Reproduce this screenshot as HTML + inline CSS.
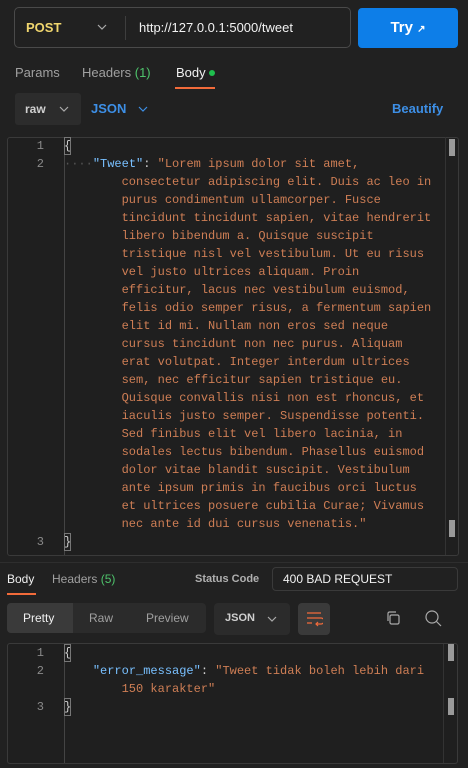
<!DOCTYPE html>
<html><head><meta charset="utf-8"><style>
*{margin:0;padding:0;box-sizing:border-box}
body{width:468px;height:768px;background:#212121;font-family:"Liberation Sans",sans-serif;color:#e6e6e6;position:relative;overflow:hidden}
.a{position:absolute}
.mono{font-family:"Liberation Mono",monospace;font-size:12px;white-space:pre;line-height:18px}
.s{color:#ce7e55}.k{color:#79c0ff}.p{color:#cfcfcf}
.ln{color:#8a8a8a;text-align:right;width:20px}
</style></head><body>
<div class="a" style="left:14px;top:7px;width:337px;height:41px;border:1px solid #4a4a4a;border-radius:5px"></div>
<div class="a" style="left:26px;top:20px;font-size:13px;font-weight:bold;color:#f0d66e">POST</div>
<svg class="a" style="left:97px;top:24px" width="10" height="7"><path d="M1 1l4 4 4-4" stroke="#aaa" fill="none" stroke-width="1.2"/></svg>
<div class="a" style="left:125px;top:16px;width:1px;height:24px;background:#3e3e3e"></div>
<div class="a" style="left:139px;top:20px;font-size:13px;color:#f2f2f2">http://127.0.0.1:5000/tweet</div>
<div class="a" style="left:358px;top:8px;width:100px;height:40px;background:#0d7ee8;border-radius:4px;color:#fff;font-weight:bold;font-size:15px;text-align:center;line-height:40px">Try <span style="font-size:10px">↗</span></div>
<div class="a" style="left:15px;top:65px;font-size:13px;color:#a0a0a0">Params</div>
<div class="a" style="left:82px;top:65px;font-size:13px;color:#a0a0a0">Headers <span style="color:#4ec36b">(1)</span></div>
<div class="a" style="left:176px;top:65px;font-size:13px;color:#f0f0f0">Body</div>
<div class="a" style="left:209px;top:70px;width:6px;height:6px;border-radius:3px;background:#1fbf4e"></div>
<div class="a" style="left:175px;top:87px;width:40px;height:2px;background:#f26b3a"></div>
<div class="a" style="left:15px;top:93px;width:66px;height:32px;background:#2c2c2c;border-radius:3px"></div>
<div class="a" style="left:25px;top:102px;font-size:12px;color:#d0d0d0;font-weight:bold">raw</div>
<svg class="a" style="left:59px;top:106px" width="10" height="7"><path d="M1 1l4 4 4-4" stroke="#aaa" fill="none" stroke-width="1.2"/></svg>
<div class="a" style="left:91px;top:101px;font-size:13px;color:#3d8fe6;font-weight:bold">JSON</div>
<svg class="a" style="left:138px;top:106px" width="10" height="7"><path d="M1 1l4 4 4-4" stroke="#3d8fe6" fill="none" stroke-width="1.2"/></svg>
<div class="a" style="left:392px;top:101px;font-size:13px;color:#3d8fe6;font-weight:bold">Beautify</div>
<div class="a" style="left:7px;top:137px;width:452px;height:419px;border:1px solid #3a3a3a;border-radius:3px;background:#1f1f1f"></div>
<div class="a" style="left:64px;top:137px;width:1px;height:418px;background:#444"></div>
<div class="a" style="left:449px;top:139px;width:6px;height:17px;background:#9a9a9a"></div>
<div class="a" style="left:449px;top:520px;width:6px;height:17px;background:#9a9a9a"></div>
<div class="a" style="left:445px;top:137px;width:1px;height:418px;background:#333"></div>
<div class="a mono ln" style="left:24px;top:137px">1</div>
<div class="a mono ln" style="left:24px;top:155px">2</div>
<div class="a mono ln" style="left:24px;top:533px">3</div>
<div class="a mono p" style="left:64px;top:137px;outline:1px solid #777;outline-offset:-1px">{</div>
<div class="a mono p" style="left:64px;top:533px;outline:1px solid #777;outline-offset:-1px">}</div>
<div class="a mono" style="left:64px;top:155px"><span style="color:#555">····</span><span class="k">"Tweet"</span><span class="p">: </span><span class="s">"Lorem ipsum dolor sit amet,
        consectetur adipiscing elit. Duis ac leo in
        purus condimentum ullamcorper. Fusce
        tincidunt tincidunt sapien, vitae hendrerit
        libero bibendum a. Quisque suscipit
        tristique nisl vel vestibulum. Ut eu risus
        vel justo ultrices aliquam. Proin
        efficitur, lacus nec vestibulum euismod,
        felis odio semper risus, a fermentum sapien
        elit id mi. Nullam non eros sed neque
        cursus tincidunt non nec purus. Aliquam
        erat volutpat. Integer interdum ultrices
        sem, nec efficitur sapien tristique eu.
        Quisque convallis nisi non est rhoncus, et
        iaculis justo semper. Suspendisse potenti.
        Sed finibus elit vel libero lacinia, in
        sodales lectus bibendum. Phasellus euismod
        dolor vitae blandit suscipit. Vestibulum
        ante ipsum primis in faucibus orci luctus
        et ultrices posuere cubilia Curae; Vivamus
        nec ante id dui cursus venenatis."</span></div>
<div class="a" style="left:0;top:562px;width:468px;height:1px;background:#2e2e2e"></div>
<div class="a" style="left:7px;top:572px;font-size:12px;color:#f0f0f0">Body</div>
<div class="a" style="left:7px;top:593px;width:29px;height:2px;background:#f26b3a"></div>
<div class="a" style="left:52px;top:572px;font-size:12px;color:#a0a0a0">Headers <span style="color:#4ec36b">(5)</span></div>
<div class="a" style="left:195px;top:573px;font-size:11px;color:#b0b0b0;font-weight:bold">Status Code</div>
<div class="a" style="left:272px;top:567px;width:186px;height:24px;border:1px solid #3a3a3a;border-radius:4px"></div>
<div class="a" style="left:283px;top:572px;font-size:12px;color:#f2f2f2">400 BAD REQUEST</div>
<div class="a" style="left:7px;top:603px;width:199px;height:30px;background:#2b2b2b;border-radius:4px"></div>
<div class="a" style="left:7px;top:603px;width:66px;height:30px;background:#3a3a3a;border-radius:4px 0 0 4px"></div>
<div class="a" style="left:23px;top:611px;font-size:12px;color:#f0f0f0">Pretty</div>
<div class="a" style="left:89px;top:611px;font-size:12px;color:#a0a0a0">Raw</div>
<div class="a" style="left:146px;top:611px;font-size:12px;color:#a0a0a0">Preview</div>
<div class="a" style="left:214px;top:603px;width:76px;height:32px;background:#2b2b2b;border-radius:4px"></div>
<div class="a" style="left:225px;top:612px;font-size:11px;font-weight:bold;color:#d0d0d0">JSON</div>
<svg class="a" style="left:267px;top:616px" width="10" height="7"><path d="M1 1l4 4 4-4" stroke="#aaa" fill="none" stroke-width="1.2"/></svg>
<div class="a" style="left:298px;top:603px;width:32px;height:32px;background:#3a3a3a;border-radius:4px"></div>
<svg class="a" style="left:305px;top:611px" width="18" height="16"><path d="M2 2h14M2 7h14a3 3 0 0 1 0 6h-5M13 11l-2 2 2 2M2 12h5" stroke="#f26b3a" fill="none" stroke-width="1.2"/></svg>
<svg class="a" style="left:385px;top:610px" width="16" height="16"><rect x="5" y="5" width="9" height="9" rx="1.5" stroke="#aaa" fill="none" stroke-width="1.2"/><path d="M3 11V3.5A1.5 1.5 0 0 1 4.5 2H11" stroke="#aaa" fill="none" stroke-width="1.2"/></svg>
<svg class="a" style="left:425px;top:610px" width="17" height="17"><circle cx="7" cy="7" r="6" stroke="#aaa" fill="none" stroke-width="1.2"/><path d="M11.5 11.5L16 16" stroke="#aaa" stroke-width="1.2"/></svg>
<div class="a" style="left:7px;top:643px;width:451px;height:121px;border:1px solid #3a3a3a;border-radius:3px;background:#1f1f1f"></div>
<div class="a" style="left:64px;top:644px;width:1px;height:119px;background:#444"></div>
<div class="a" style="left:443px;top:644px;width:1px;height:119px;background:#333"></div>
<div class="a" style="left:448px;top:644px;width:6px;height:17px;background:#9a9a9a"></div>
<div class="a" style="left:448px;top:698px;width:6px;height:17px;background:#9a9a9a"></div>
<div class="a mono ln" style="left:24px;top:644px">1</div>
<div class="a mono ln" style="left:24px;top:662px">2</div>
<div class="a mono ln" style="left:24px;top:698px">3</div>
<div class="a mono p" style="left:64px;top:644px;outline:1px solid #777;outline-offset:-1px">{</div>
<div class="a mono p" style="left:64px;top:698px;outline:1px solid #777;outline-offset:-1px">}</div>
<div class="a mono" style="left:64px;top:662px">    <span class="k">"error_message"</span><span class="p">: </span><span class="s">"Tweet tidak boleh lebih dari
        150 karakter"</span></div>
</body></html>
